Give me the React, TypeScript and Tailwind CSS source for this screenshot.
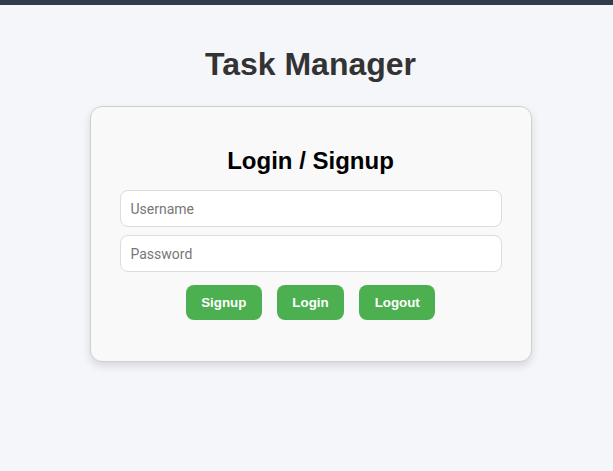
export default function App() {
  return (
    <div className="min-h-screen bg-[#f5f6fa] font-['Liberation_Sans',Arial,sans-serif]">
      <div className="h-[5px] bg-[#323b4b]" />
      <div className="flex flex-col items-center pl-[8px]">
        <h1 className="mt-[41px] text-[32px] font-bold leading-[37px] text-[#333]">Task Manager</h1>
        <div className="mt-[23px] w-[442px] rounded-[12px] border border-[#cfcfcf] bg-[#f9f9f9] px-[29px] pb-[41px] pt-[40px] shadow-[0_4px_8px_rgba(0,0,0,0.12)]">
          <h2 className="text-center text-[24px] font-bold leading-[28px] text-black">Login / Signup</h2>
          <div className="mt-[15px] flex flex-col gap-[8px]">
            <input
              type="text"
              placeholder="Username"
              className="h-[37px] w-full rounded-[8px] border border-[#dcdcdc] bg-white px-[10px] font-['Roboto',sans-serif] text-[14px] text-[#333] placeholder:text-[#777] outline-none"
            />
            <input
              type="password"
              placeholder="Password"
              className="h-[37px] w-full rounded-[8px] border border-[#dcdcdc] bg-white px-[10px] font-['Roboto',sans-serif] text-[14px] text-[#333] placeholder:text-[#777] outline-none"
            />
          </div>
          <div className="mt-[13px] flex justify-center gap-[15px]">
            <button className="h-[35px] rounded-[8px] bg-[#4caf50] px-[15.5px] text-[13.33px] font-bold text-white">Signup</button>
            <button className="h-[35px] rounded-[8px] bg-[#4caf50] px-[15.5px] text-[13.33px] font-bold text-white">Login</button>
            <button className="h-[35px] rounded-[8px] bg-[#4caf50] px-[15.5px] text-[13.33px] font-bold text-white">Logout</button>
          </div>
        </div>
      </div>
    </div>
  );
}
